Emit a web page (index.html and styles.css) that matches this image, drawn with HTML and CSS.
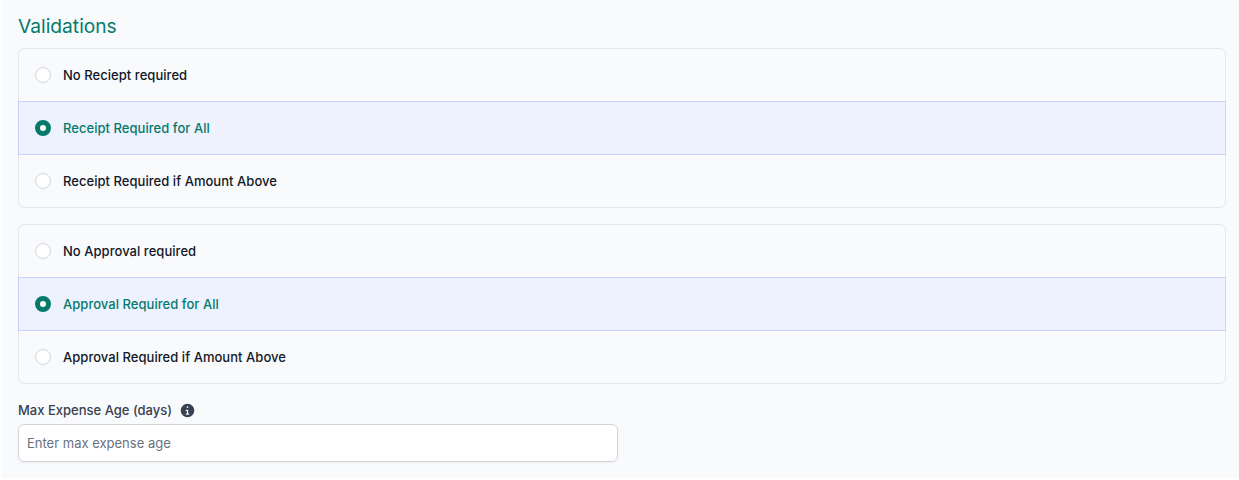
FILE: index.html
```
<!DOCTYPE html>
<html lang="en">
<head>
<meta charset="utf-8">
<title>Validations</title>
<link rel="stylesheet" href="styles.css">
</head>
<body>
<main class="panel">
  <h2 class="title">Validations</h2>
  <div class="group">
    <label class="row"><span class="radio"></span><span>No Reciept required</span></label>
    <label class="row selected"><span class="radio"></span><span>Receipt Required for All</span></label>
    <label class="row"><span class="radio"></span><span>Receipt Required if Amount Above</span></label>
  </div>
  <div class="group">
    <label class="row"><span class="radio"></span><span>No Approval required</span></label>
    <label class="row selected"><span class="radio"></span><span>Approval Required for All</span></label>
    <label class="row"><span class="radio"></span><span>Approval Required if Amount Above</span></label>
  </div>
  <div class="field">
    <div class="field-label">
      <span>Max Expense Age (days)</span>
      <svg class="info" viewBox="0 0 20 20" aria-hidden="true"><path fill-rule="evenodd" clip-rule="evenodd" d="M18 10a8 8 0 1 1-16 0 8 8 0 0 1 16 0zm-7-4a1 1 0 1 1-2 0 1 1 0 0 1 2 0zM8.5 9a.75.75 0 0 0 0 1.5h.75v3h-.75a.75.75 0 0 0 0 1.5h3a.75.75 0 0 0 0-1.5h-.75V9.75A.75.75 0 0 0 10 9H8.500z"/></svg>
    </div>
    <input class="input" type="text" placeholder="Enter max expense age">
  </div>
</main>
</body>
</html>
```
FILE: styles.css
```
* { box-sizing: border-box; }
html, body { margin: 0; background: #fff; }
body { font-family: Inter, "Liberation Sans", sans-serif; height: 480px; overflow: hidden; }
.panel {
  margin-left: 2px;
  height: 478px;
  background: #f9fafc;
  padding: 14px 13px 0 16px;
}
.title {
  margin: 0 0 10px;
  font-size: 19.2px;
  line-height: 24px;
  font-weight: 400;
  color: #047a6c;
}
.group {
  border: 1px solid #e5e7eb;
  border-radius: 6px;
  margin-bottom: 16px;
  display: flex;
  flex-direction: column;
}
.row {
  height: 52px;
  display: flex;
  align-items: center;
  gap: 12px;
  padding-left: 16px;
  font-size: 13px;
  line-height: 20px;
  letter-spacing: 0.04px;
  font-weight: 500;
  color: #111827;
}
.row.selected {
  margin: 0 -1px;
  height: 54px;
  background: #eef2ff;
  border: 1px solid #c7d2fe;
  color: #047a6c;
}
.radio {
  width: 16px;
  height: 16px;
  border-radius: 50%;
  background: #fff;
  border: 1px solid #d1d5db;
  flex: none;
}
.selected .radio {
  border: 5px solid #047a6c;
}
.field-label {
  display: flex;
  align-items: center;
  gap: 7px;
  font-size: 13px;
  line-height: 20px;
  font-weight: 500;
  color: #374151;
  margin-bottom: 4px;
}
.info { width: 17px; height: 17px; fill: #374151; }
.input {
  display: block;
  width: 600px;
  height: 38px;
  padding: 0 8px;
  border: 1px solid #d1d5db;
  border-radius: 6px;
  background: #fff;
  font: 400 13px Inter, "Liberation Sans", sans-serif;
  box-shadow: 0 1px 2px rgba(0,0,0,.05);
}
.input::placeholder { color: #6b7280; opacity: 1; }
```
